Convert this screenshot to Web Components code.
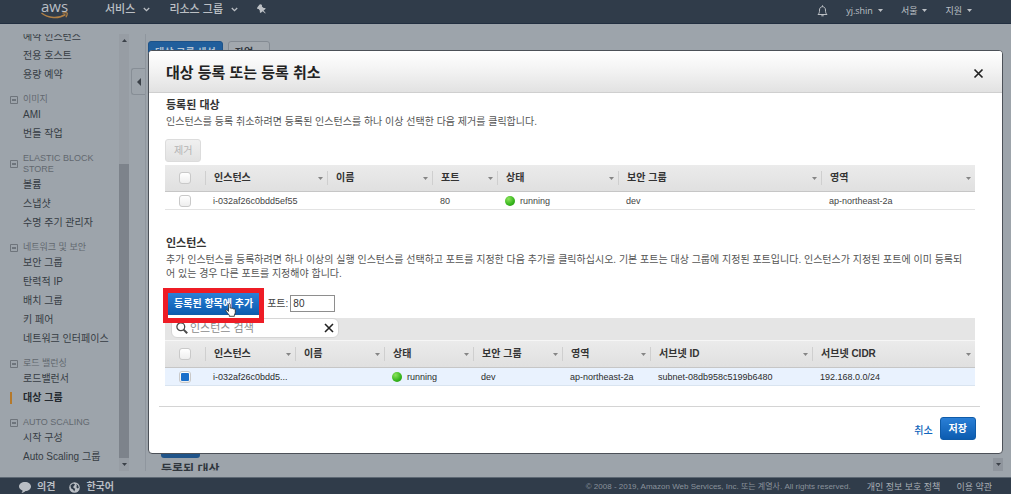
<!DOCTYPE html>
<html lang="ko">
<head>
<meta charset="utf-8">
<meta name="viewport" content="width=device-width, initial-scale=1">
<title>대상 그룹 | EC2</title>
<style>
  :root {
    --shade: #9da4ab;
    --bar: #303c4a;
    --blue: #1166bb;
    --font: "Liberation Sans", Arial, "Noto Sans CJK KR", sans-serif;
  }
  body {
    margin: 0;
    font: 10px/14px var(--font);
    color: #444;
    background: var(--shade);
  }
</style>
</head>
<body>
<console-app></console-app>

<script>
// ============================================================
// <top-bar>: navigation bar at the top of the console
// ============================================================
const chevron = `<svg width="7" height="5" viewBox="0 0 7 5"><path d="M.8 1l2.7 2.6L6.2 1" fill="none" stroke="currentColor" stroke-width="1.3"/></svg>`;
const caret = `<svg width="5" height="3" viewBox="0 0 5 3"><path d="M0 0h5L2.5 3z" fill="currentColor"/></svg>`;

class TopBar extends HTMLElement {
  constructor() {
    super();
    this.attachShadow({ mode: "open" }).innerHTML = `
      <style>
        :host {
          display: block;
          height: 23px;
          background: var(--bar);
          border-bottom: 1px solid #222f40;
          color: #bcc0c5;
        }
        nav { display: flex; align-items: flex-start; padding: 0 39px 0 41px; }
        a, button {
          font: inherit;
          color: inherit;
          text-decoration: none;
          background: none;
          border: 0;
          padding: 0;
          display: flex;
          align-items: center;
        }
        svg { display: block; }
        .logo { display: block; width: 27px; margin-right: 37px; }
        .logo span {
          display: block;
          font: 500 15px/12px "Open Sans", sans-serif;
          color: #b9bec4;
        }
        .menu { font-size: 11px; font-weight: 500; line-height: 18px; gap: 8px; margin-right: 19px; }
        .pin { height: 18px; }
        .right {
          margin-left: auto;
          display: flex;
          gap: 18px;
          font: 9px/21px "Open Sans", "Noto Sans CJK KR", sans-serif;
        }
        .right button { gap: 5px; }
      </style>
      <nav>
        <a class="logo" href="#">
          <span>aws</span>
          <svg width="27" height="7" viewBox="0 0 27 7" fill="none" stroke="#b07f45">
            <path d="M.5 1C7 6.500 18 6.800 24.500 2.500" stroke-width="1.500"/>
            <path d="M21.500 1.200c3.500-.8 4.800-.6 4.800.2s-.5 2.400-1.400 3.900" stroke-width="1.200"/>
          </svg>
        </a>
        <button class="menu">서비스 ${chevron}</button>
        <button class="menu">리소스 그룹 ${chevron}</button>
        <button class="pin" aria-label="고정">
          <svg width="9" height="10" viewBox="0 0 9 10">
            <path d="M2.600.6l1.500-.3 1 1.200-.2 1.100 1.800 1.400 1.400-.1.600.8-2.100 1.800 2 2.400-.4.500-2.500-2.200L3.600 9l-.8-.8.100-1.400L1.600 5 .5 5.100 0 3.900l1-1.300z" fill="currentColor"/>
          </svg>
        </button>
        <div class="right">
          <button aria-label="알림">
            <svg width="11" height="12" viewBox="0 0 11 12" fill="none" stroke="currentColor">
              <path d="M1 9.500c1.300-1.200 1.500-2.500 1.500-4.500 0-2 1.300-3.300 3-3.300s3 1.300 3 3.300c0 2 .2 3.300 1.500 4.500z"/>
              <path d="M5.500.3v1.400M4.300 10.800h2.400"/>
            </svg>
          </button>
          <button>yj.shin ${caret}</button>
          <button>서울 ${caret}</button>
          <button>지원 ${caret}</button>
        </div>
      </nav>
    `;
  }
}
customElements.define("top-bar", TopBar);

// ============================================================
// <scroll-track>: classic scroll bar with arrow ends
// "idle" leaves only the lower arrow
// ============================================================
class ScrollTrack extends HTMLElement {
  constructor() {
    super();
    this.attachShadow({ mode: "open" }).innerHTML = `
      <style>
        :host {
          display: flex;
          flex-direction: column;
          align-items: center;
          width: 10px;
          background: #979da4;
          color: #3b4148;
        }
        :host([idle]) { background: none; }
        :host([idle]) .up { visibility: hidden; }
        :host([idle]) .down { background: #8f959d; }
        .arrow { flex: none; display: grid; place-items: center; width: 100%; height: 13px; }
        .rail { flex: 1; width: 100%; display: flex; flex-direction: column; justify-content: flex-end; }
        .thumb { height: var(--thumb, 0); background: #7d838b; }
      </style>
      <div class="arrow up"><svg width="5" height="3" viewBox="0 0 5 3"><path d="M0 3h5L2.500 0z" fill="currentColor"/></svg></div>
      <div class="rail"><div class="thumb"></div></div>
      <div class="arrow down"><svg width="5" height="3" viewBox="0 0 5 3"><path d="M0 0h5L2.500 3z" fill="currentColor"/></svg></div>
    `;
  }
}
customElements.define("scroll-track", ScrollTrack);

// ============================================================
// <side-nav>: EC2 menu, one section per service
// ============================================================
const sections = [
  { items: ["예약 인스턴스", "전용 호스트", "용량 예약"] },
  { title: "이미지", items: ["AMI", "번들 작업"] },
  { title: "ELASTIC BLOCK STORE", items: ["볼륨", "스냅샷", "수명 주기 관리자"] },
  { title: "네트워크 및 보안", items: ["보안 그룹", "탄력적 IP", "배치 그룹", "키 페어", "네트워크 인터페이스"] },
  { title: "로드 밸런싱", items: ["로드밸런서", "대상 그룹"] },
  { title: "AUTO SCALING", items: ["시작 구성", "Auto Scaling 그룹"] },
];

class SideNav extends HTMLElement {
  constructor() {
    super();
    this.attachShadow({ mode: "open" }).innerHTML = `
      <style>
        :host { display: flex; width: 129px; overflow: hidden; }
        /* list is scrolled a little past its first entry */
        nav { flex: 1; margin-top: -7px; padding-left: 10px; white-space: nowrap; }
        section { margin-bottom: 10px; }
        h2 {
          display: flex;
          align-items: center;
          gap: 5px;
          margin: 0;
          font-size: 9px;
          font-weight: 400;
          line-height: 11px;
          color: #62686f;
        }
        h2 span { width: 75px; white-space: normal; }
        a {
          display: block;
          padding-left: 13px;
          line-height: 19px;
          color: #363c43;
          text-decoration: none;
        }
        a[aria-current] {
          display: flex;
          align-items: center;
          gap: 10px;
          padding-left: 0;
          font-weight: 700;
          color: #23282e;
        }
        a[aria-current]::before { content: ""; width: 2px; height: 12px; margin-right: 1px; background: #b5792b; }
        scroll-track { --thumb: 294px; }
      </style>
      <nav>
        ${sections
          .map(
            (s) => `
          <section>
            ${s.title ? `<h2><svg width="8" height="8" viewBox="0 0 8 8"><path d="M.5.5h7v7h-7z" fill="none" stroke="#6e747b"/><path d="M2 4h4" stroke="#3f454c"/></svg><span>${s.title}</span></h2>` : ""}
            ${s.items.map((i) => `<a href="#" ${i === "대상 그룹" ? 'aria-current="page"' : ""}>${i}</a>`).join("")}
          </section>`
          )
          .join("")}
      </nav>
      <scroll-track></scroll-track>
    `;
  }
}
customElements.define("side-nav", SideNav);

// ============================================================
// <target-groups>: page that lies behind the dialog
// ============================================================
class TargetGroups extends HTMLElement {
  constructor() {
    super();
    this.attachShadow({ mode: "open" }).innerHTML = `
      <style>
        :host { display: flex; overflow: hidden; }
        .fold {
          align-self: flex-start;
          display: grid;
          place-items: center;
          width: 14px;
          height: 27px;
          margin: 34px 0 0 2px;
          padding: 0;
          background: none;
          border: 1px solid #878e96;
          border-right: 0;
          border-radius: 3px 0 0 3px;
        }
        .page {
          flex: 1;
          display: flex;
          flex-direction: column;
          justify-content: space-between;
          border-left: 1px solid #8f969e;
          padding: 7px 0 0 2px;
        }
        .tools { display: flex; gap: 5px; }
        .tools button {
          height: 23px;
          padding: 0 6px;
          font: 700 10px/20px var(--font);
          color: #30363d;
          background: #a2a8ae;
          border: 1px solid #848b93;
          border-radius: 3px;
        }
        button.main { color: #b5c3d2; background: #205e9c; border-color: #1d5288; }
        .detail { padding-left: 13px; margin-bottom: -7px; }
        .strip { width: 39px; height: 15px; background: #205489; border-radius: 3px; }
        h2 { margin: 5px 0 0; font-size: 12px; line-height: 15px; color: #30363d; }
      </style>
      <button class="fold" aria-label="접기"><svg width="4" height="8" viewBox="0 0 4 8"><path d="M4 0v8L0 4z" fill="#3b4148"/></svg></button>
      <div class="page">
        <div class="tools">
          <button class="main">대상 그룹 생성</button>
          <button>작업 ${chevron}</button>
        </div>
        <div class="detail">
          <div class="strip"></div>
          <h2>등록된 대상</h2>
        </div>
      </div>
      <scroll-track idle></scroll-track>
    `;
  }
}
customElements.define("target-groups", TargetGroups);

// ============================================================
// <bottom-bar>: footer
// ============================================================
class BottomBar extends HTMLElement {
  constructor() {
    super();
    this.attachShadow({ mode: "open" }).innerHTML = `
      <style>
        :host {
          display: flex;
          align-items: center;
          box-sizing: border-box;
          height: 17px;
          padding: 2px 19px 0 19px;
          border-top: 1px solid #5d6873;
          background: var(--bar);
          color: #8a929b;
          font-size: 9px;
          white-space: nowrap;
        }
        a { color: #a9afb6; text-decoration: none; }
        .left { display: flex; align-items: center; gap: 6px; margin-right: 14px; font-size: 10px; font-weight: 700; color: #b9bec4; }
        small { margin-left: auto; font-size: 8px; }
        .right { margin-left: 16px; }
      </style>
      <a class="left" href="#">
        <svg width="12" height="11" viewBox="0 0 12 11"><path d="M6 0c3.400 0 6 2 6 4.500S9.400 9 6.500 9c-1 1.200-2.300 1.800-4 2 .8-.8 1.100-1.600 1-2.500C1.300 7.700 0 6.300 0 4.500 0 2 2.600 0 6 0z" fill="currentColor"/></svg>
        의견
      </a>
      <a class="left" href="#">
        <svg width="11" height="11" viewBox="0 0 11 11"><circle cx="5.500" cy="5.500" r="5.300" fill="currentColor"/><path d="M1.500 3.500l2.500-2 2 .8-1 1.700-1 1 1.200 1.200 1 .6-.9 2.700-1.300-2.100-2-1.200zM7 2l2 1.300.8 2.500-1.500.8-1-1.500.6-1.300z" fill="#303c4a"/></svg>
        한국어
      </a>
      <small>© 2008 - 2019, Amazon Web Services, Inc. 또는 계열사. All rights reserved.</small>
      <a class="right" href="#">개인 정보 보호 정책</a>
      <a class="right" href="#">이용 약관</a>
    `;
  }
}
customElements.define("bottom-bar", BottomBar);

// ============================================================
// <aws-button>: kind = "disabled" greys it out
// ============================================================
class AwsButton extends HTMLElement {
  constructor() {
    super();
    const disabled = this.getAttribute("kind") === "disabled";
    this.attachShadow({ mode: "open" }).innerHTML = `
      <style>
        :host { display: inline-block; }
        button {
          display: block;
          height: 23px;
          padding: 0 8px;
          font: 700 10px/19px var(--font);
          color: #fff;
          background: linear-gradient(#2a7fd6, #0c5cb0);
          border: 1px solid #0f5ba8;
          border-radius: 3px;
        }
        button:disabled {
          font-weight: 400;
          color: #b4b4b4;
          background: linear-gradient(#f0f0f0, #e2e2e2);
          border-color: #dcdcdc;
        }
      </style>
      <button ${disabled ? "disabled" : ""}><slot></slot></button>
    `;
  }
}

// ============================================================
// <instance-table>: grid of instances, filled from its "set" key
// ============================================================
const grids = {
  registered: {
    columns: [["인스턴스", 122], ["이름", 105], ["포트", 65], ["상태", 121], ["보안 그룹", 203], ["영역", 154]],
    row: ["i-032af26c0bdd5ef55", "", "80", "running", "dev", "ap-northeast-2a"],
    checked: false,
  },
  available: {
    columns: [["인스턴스", 90], ["이름", 89], ["상태", 89], ["보안 그룹", 89], ["영역", 88], ["서브넷 ID", 162], ["서브넷 CIDR", 163]],
    row: ["i-032af26c0bdd5...", "", "running", "dev", "ap-northeast-2a", "subnet-08db958c5199b6480", "192.168.0.0/24"],
    checked: true,
  },
};

class InstanceTable extends HTMLElement {
  connectedCallback() {
    const { columns, row, checked } = grids[this.getAttribute("set")];
    this.attachShadow({ mode: "open" }).innerHTML = `
      <style>
        :host { display: block; }
        table { width: 100%; table-layout: fixed; border-collapse: separate; border-spacing: 0; }
        th, td { padding: 0; text-align: left; white-space: nowrap; }
        th {
          height: 26px;
          font-size: 10px;
          line-height: 14px;
          color: #333;
          background: linear-gradient(#ebebeb, #e0e0e0);
          border-bottom: 1px solid #c6c6c6;
        }
        .name {
          display: flex;
          align-items: center;
          justify-content: space-between;
          padding: 0 4px 0 8px;
          border-left: 1px solid #cfcfcf;
        }
        td { height: 17px; padding-left: 8px; font-size: 9px; line-height: 14px; border-bottom: 1px solid #e3e3e3; }
        tr.on td { background: #e9f2fe; border-color: #d9e4f0; color: #2c2c2c; }
        th:first-child, td:first-child { padding: 0; text-align: center; }
        input {
          appearance: none;
          display: inline-grid;
          place-items: center;
          box-sizing: border-box;
          width: 12px;
          height: 12px;
          margin: 0;
          vertical-align: middle;
          background: linear-gradient(#fff, #eee);
          border: 1px solid #c9c9c9;
          border-radius: 3px;
        }
        input:checked::before { content: ""; width: 8px; height: 8px; border-radius: 1px; background: #1a6fca; }
        .state { display: flex; align-items: center; gap: 5px; }
        .state::before {
          content: "";
          width: 10px;
          height: 10px;
          border-radius: 50%;
          background: radial-gradient(circle at 35% 30%, #8be35b, #35b41c 60%, #248a12);
        }
      </style>
      <table>
        <colgroup>
          <col style="width: 40px">
          ${columns.map(([, w]) => `<col style="width: ${w}px">`).join("")}
        </colgroup>
        <thead>
          <tr>
            <th><input type="checkbox" aria-label="모두 선택"></th>
            ${columns
              .map(([name]) => `<th><div class="name">${name}<svg width="5" height="3" viewBox="0 0 5 3"><path d="M0 0h5L2.500 3z" fill="#858585"/></svg></div></th>`)
              .join("")}
          </tr>
        </thead>
        <tbody>
          <tr class="${checked ? "on" : ""}">
            <td><input type="checkbox" aria-label="${row[0]}" ${checked ? "checked" : ""}></td>
            ${row.map((v) => `<td>${v === "running" ? `<div class="state">${v}</div>` : v}</td>`).join("")}
          </tr>
        </tbody>
      </table>
    `;
  }
}

// ============================================================
// <add-toolbar>: add button with its highlight, port and search
// ============================================================
class AddToolbar extends HTMLElement {
  constructor() {
    super();
    this.attachShadow({ mode: "open" }).innerHTML = `
      <style>
        :host { display: block; }
        .row { display: flex; align-items: center; padding-bottom: 3px; }
        .add { position: relative; margin-right: 5px; }
        .add aws-button { display: block; }
        .mark { position: absolute; inset: -4px -2px -8px; border: 5px solid #ee1c25; }
        .hand { position: absolute; left: 60px; top: 11px; }
        label { margin-right: 2px; }
        input { box-sizing: border-box; font: inherit; color: #333; }
        #port { width: 45px; height: 17px; padding: 0 2px; background: #fff; border: 1px solid #8e8e8e; }
        .bar { display: flex; height: 22px; padding-left: 6px; background: #e5e5e5; border-bottom: 1px solid #f6f6f6; }
        .search {
          display: flex;
          align-items: center;
          box-sizing: border-box;
          width: 168px;
          height: 20px;
          padding: 0 4px;
          gap: 2px;
          background: #fff;
          border: 1px solid #d6d6d6;
          border-radius: 6px;
        }
        .search input { flex: 1; min-width: 0; padding: 0; border: 0; outline: 0; font-size: 11px; line-height: 16px; background: none; }
        .search input::placeholder { color: #8b8b8b; }
        .search button { display: flex; padding: 0; border: 0; background: none; }
      </style>
      <div class="row">
        <div class="add">
          <aws-button>등록된 항목에 추가</aws-button>
          <div class="mark"></div>
          <svg class="hand" width="12" height="14" viewBox="0 0 12 14">
            <path d="M3.500 1.500c0-1.200 1.700-1.200 1.700 0v3.700c.5-.5 1.600-.3 1.700.4.600-.5 1.600-.2 1.700.5.900-.4 1.700.1 1.700.9v2.500c0 1-.7 1.800-.9 2.600v1.200H4.300v-1.100C3.200 11 2.200 9.700.900 8c-.5-.9.5-1.500 1.200-.9l1.400 1.300z" fill="#fff" stroke="#222" stroke-width=".8"/>
          </svg>
        </div>
        <label for="port">포트:</label>
        <input id="port" type="text" value="80">
      </div>
      <div class="bar">
        <div class="search">
          <svg width="12" height="12" viewBox="0 0 12 12" fill="none" stroke="#4a4a4a"><circle cx="4.800" cy="4.800" r="3.900" stroke-width="1.300"/><path d="M7.600 7.600l3.600 3.600" stroke-width="2"/></svg>
          <input type="text" placeholder="인스턴스 검색" aria-label="인스턴스 검색">
          <button aria-label="지우기"><svg width="10" height="10" viewBox="0 0 10 10"><path d="M1 1l8 8M9 1L1 9" stroke="#222" stroke-width="1.600"/></svg></button>
        </div>
      </div>
    `;
  }
}

// ============================================================
// <register-dialog>: 대상 등록 또는 등록 취소
// ============================================================
class RegisterDialog extends HTMLElement {
  constructor() {
    super();
    this.attachShadow({ mode: "open" }).innerHTML = `
      <style>
        :host {
          display: block;
          background: #fff;
          border: 1px solid #4c5158;
          border-radius: 4px;
          overflow: hidden;
        }
        header {
          display: flex;
          align-items: center;
          justify-content: space-between;
          box-sizing: border-box;
          height: 42px;
          padding: 3px 18px 0 17px;
          background: linear-gradient(#fff, #f2f2f2 50%, #e2e2e2);
          border-bottom: 1px solid #cfcfcf;
        }
        h1 { margin: 0; font-size: 15px; line-height: 20px; color: #222; }
        header button { display: flex; padding: 0; border: 0; background: none; }
        main { padding: 4px 27px 0 16px; }
        h2 { margin: 0; padding-left: 1px; font-size: 11px; line-height: 16px; color: #333; }
        p { margin: 2px 0 0; padding: 0 7px 0 1px; line-height: 14px; color: #555; }
        .remove { display: flex; margin: 10px 0 3px; }
        .second { margin-top: 25px; }
        add-toolbar { margin-top: 11px; }
        footer {
          display: flex;
          align-items: center;
          justify-content: flex-end;
          gap: 7px;
          margin: 20px 22px 0 10px;
          padding: 10px 4px 13px;
          border-top: 1px solid #d4d4d4;
        }
        footer a { padding-top: 4px; color: var(--blue); font-weight: 500; text-decoration: none; }
      </style>
      <header>
        <h1>대상 등록 또는 등록 취소</h1>
        <button aria-label="닫기"><svg width="11" height="11" viewBox="0 0 11 11"><path d="M1.500 1.500l8 8M9.500 1.500l-8 8" stroke="#222" stroke-width="1.700"/></svg></button>
      </header>
      <main>
        <h2>등록된 대상</h2>
        <p>인스턴스를 등록 취소하려면 등록된 인스턴스를 하나 이상 선택한 다음 제거를 클릭합니다.</p>
        <div class="remove"><aws-button kind="disabled">제거</aws-button></div>
        <instance-table set="registered"></instance-table>
        <h2 class="second">인스턴스</h2>
        <p>추가 인스턴스를 등록하려면 하나 이상의 실행 인스턴스를 선택하고 포트를 지정한 다음 추가를 클릭하십시오. 기본 포트는 대상 그룹에 지정된 포트입니다. 인스턴스가 지정된 포트에 이미 등록되어 있는 경우 다른 포트를 지정해야 합니다.</p>
        <add-toolbar></add-toolbar>
        <instance-table set="available"></instance-table>
      </main>
      <footer>
        <a href="#">취소</a>
        <aws-button>저장</aws-button>
      </footer>
    `;
  }
}

customElements.define("aws-button", AwsButton);
customElements.define("instance-table", InstanceTable);
customElements.define("add-toolbar", AddToolbar);
customElements.define("register-dialog", RegisterDialog);

// ============================================================
// <console-app>: page frame, dialog on top
// ============================================================
class ConsoleApp extends HTMLElement {
  constructor() {
    super();
    this.attachShadow({ mode: "open" }).innerHTML = `
      <style>
        :host { display: flex; flex-direction: column; height: 100vh; overflow: hidden; }
        .middle { flex: 1; min-height: 0; display: flex; padding: 10px 8px 6px 0; }
        target-groups { flex: 1; }
        register-dialog { position: fixed; top: 50px; left: 148px; right: 8px; }
      </style>
      <top-bar></top-bar>
      <div class="middle">
        <side-nav></side-nav>
        <target-groups></target-groups>
      </div>
      <bottom-bar></bottom-bar>
      <register-dialog></register-dialog>
    `;
  }
}
customElements.define("console-app", ConsoleApp);
</script>
</body>
</html>
